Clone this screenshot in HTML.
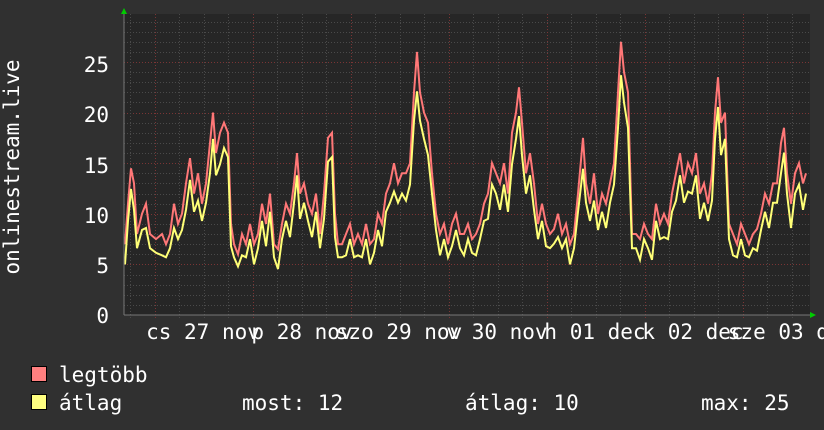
<!DOCTYPE html>
<html><head><meta charset="utf-8"><style>
html,body{margin:0;padding:0;background:#303030;width:824px;height:430px;overflow:hidden}
svg{display:block}
text{font-family:"DejaVu Sans Mono","Liberation Mono",monospace;fill:#fff;font-size:21px}
</style></head><body>
<svg id="s" width="824" height="430" xmlns="http://www.w3.org/2000/svg">
<rect x="0" y="0" width="824" height="430" fill="#303030"/>
<rect x="124" y="14" width="686" height="301" fill="#262626"/>
<g id="grid"></g>
<polyline id="mx" fill="none" stroke="#ff7777" stroke-width="2" points=""/>
<polyline id="av" fill="none" stroke="#ffff77" stroke-width="2" points=""/>
<line x1="124" y1="315" x2="812" y2="315" stroke="#777" stroke-width="1"/>
<line x1="124" y1="12" x2="124" y2="315" stroke="#777" stroke-width="1"/>
<polygon points="121,14 124,8 127,14" fill="#0c0"/>
<polygon points="810,312 816,315 810,318" fill="#0c0"/>
<text x="109" y="72" text-anchor="end">25</text>
<text x="109" y="122" text-anchor="end">20</text>
<text x="109" y="173" text-anchor="end">15</text>
<text x="109" y="223" text-anchor="end">10</text>
<text x="109" y="273" text-anchor="end">5</text>
<text x="109" y="323" text-anchor="end">0</text>
<text transform="translate(19,167) rotate(-90)" text-anchor="middle">onlinestream.live</text>
<g text-anchor="middle">
<text x="203" y="339">cs 27 nov</text>
<text x="302" y="339">p 28 nov</text>
<text x="399" y="339">szo 29 nov</text>
<text x="497" y="339">v 30 nov</text>
<text x="595" y="339">h 01 dec</text>
<text x="693" y="339">k 02 dec</text>
<text x="791" y="339">sze 03 dec</text>
</g>
<rect x="31.5" y="366.5" width="15" height="15" fill="#ff8080" stroke="#000"/>
<rect x="31.5" y="394.5" width="15" height="15" fill="#ffff80" stroke="#000"/>
<text x="59" y="382">legtöbb</text>
<text x="59" y="410">átlag</text>
<text x="242" y="410">most: 12</text>
<text x="465" y="410">átlag: 10</text>
<text x="701" y="410">max: 25</text>
</svg>
<script>
var NS="http://www.w3.org/2000/svg",g=document.getElementById("grid");
function ln(x1,y1,x2,y2,c){var l=document.createElementNS(NS,"line");l.setAttribute("x1",x1);l.setAttribute("y1",y1);l.setAttribute("x2",x2);l.setAttribute("y2",y2);l.setAttribute("stroke",c);l.setAttribute("stroke-width","1");l.setAttribute("stroke-dasharray","1,2");g.appendChild(l);}
for(var v=1;v<=29;v++){var y=Math.round(315-v*10.12)+.5;ln(124,y,810,y,v%5==0?"#7a3535":"#4a4a4a");}
for(var x=130;x<810;x+=24.5){var xx=Math.round(x)+.5;var maj=Math.abs(((x-154)/98)-Math.round((x-154)/98))<0.01;ln(xx,14,xx,318,maj?"#7a3535":"#4a4a4a");}
var d=[125,7,128,11,131,14.5,134,13,137,8,142,10,146,11,150,8,156,7.5,162,8,166,7,170,8,174,11,178,9,182,10,186,13,190,15.5,194,12,198,14,202,11,206,13,210,17,213,20,216,16,220,18,224,19,228,18,231,9,234,7,238,6,242,8,246,7,250,9,254,7,258,8,262,11,266,9,270,12,274,7,278,6.5,282,9,286,11,290,10,294,13,297,16,300,12,304,13,308,11,312,10,316,12,320,8,324,12,328,17.5,332,18,335,10,338,7,342,7,346,8,350,9,354,7,358,8,362,7,366,9,370,7,374,7.5,378,10,382,9,386,12,390,13,394,15,398,13,402,14,406,14,410,15,414,22,417,26,420,22,424,20,428,19,432,14,436,10,440,8,444,9,448,7,452,9,456,10,460,8,464,8,468,9,472,7.5,476,8,480,9,484,11,488,12,492,15,496,14,500,13,504,15,508,12,512,18,516,20,519,22.5,522,19,526,14,530,16,534,13,538,9,542,11,546,9,550,8,554,8.5,558,10,562,8,566,9,570,7,574,8,578,12,583,17.5,586,13,590,11,594,14,598,10,602,12,606,11,610,13,614,15,618,22,621,27,624,24,628,22,632,8,636,8,640,7.5,644,9,648,8,652,7.5,656,11,660,9,664,10,668,9,672,12,676,14,680,16,684,13,688,15,692,14,696,16,700,12,704,13,708,11,712,14,715,20,718,23.5,721,19,725,20,729,9,733,8,737,7,741,9,745,8,749,7,753,8,757,8.5,761,10,765,12,769,11,773,13,777,13,781,17,784,18.5,787,14,791,11,795,14,799,15,803,13,806,14];
var pm=[],pa=[];
for(var i=0;i<d.length;i+=2){var x=d[i],v=d[i+1];pm.push(x+","+(315-v*10.12).toFixed(1));var a=v*0.9-0.6+((i/2)%3==0?-0.7:0);pa.push(x+","+(315-a*10.12).toFixed(1));}
document.getElementById("mx").setAttribute("points",pm.join(" "));
document.getElementById("av").setAttribute("points",pa.join(" "));
</script>
</body></html>
